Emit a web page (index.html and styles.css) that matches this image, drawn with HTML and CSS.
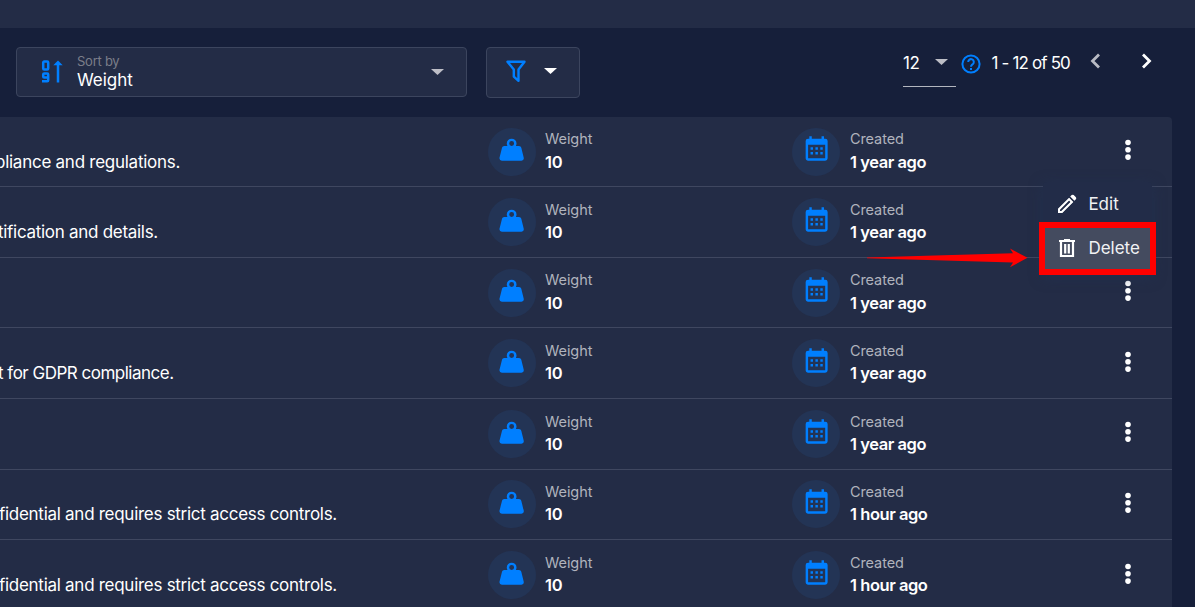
FILE: index.html
```html
<!DOCTYPE html>
<html lang="en">
<head>
<meta charset="utf-8">
<title>Weights</title>
<link rel="stylesheet" href="styles.css">
</head>
<body>
<svg width="0" height="0" class="defs">
  <symbol id="weight" viewBox="0 0 24 24"><path d="M12,3A4,4 0 0,1 16,7C16,7.73 15.81,8.41 15.46,9H18C18.95,9 19.75,9.67 19.95,10.56C21.96,18.57 22,18.78 22,19A2,2 0 0,1 20,21H4A2,2 0 0,1 2,19C2,18.78 2.04,18.57 4.05,10.56C4.25,9.67 5.05,9 6,9H8.54C8.19,8.41 8,7.73 8,7A4,4 0 0,1 12,3M12,5A2,2 0 0,0 10,7A2,2 0 0,0 12,9A2,2 0 0,0 14,7A2,2 0 0,0 12,5Z"/></symbol>
  <symbol id="calendar" viewBox="0 0 24 24"><path d="M9,10V12H7V10H9M13,10V12H11V10H13M17,10V12H15V10H17M19,3A2,2 0 0,1 21,5V19A2,2 0 0,1 19,21H5C3.89,21 3,20.1 3,19V5A2,2 0 0,1 5,3H6V1H8V3H16V1H18V3H19M19,19V8H5V19H19M9,14V16H7V14H9M13,14V16H11V14H13M17,14V16H15V14H17Z"/></symbol>
  <symbol id="dots" viewBox="0 0 6 22"><circle cx="3" cy="3.5" r="2.8"/><circle cx="3" cy="10.8" r="2.8"/><circle cx="3" cy="18.1" r="2.8"/></symbol>
</svg>
<header class="topbar"></header>
<section class="toolbar">
  <div class="sort">
    <svg class="sort-icon" width="22" height="23" viewBox="0 0 22 23"><g fill="none" stroke="#007fff" stroke-width="2.5"><rect x="2.2" y="1.6" width="5" height="7.800" rx="1"/><path d="M7.200 17.400H3.200Q2.200 17.400 2.200 16.400V14.600Q2.200 13.600 3.200 13.600H6.200Q7.200 13.600 7.200 14.600V20.200Q7.200 21.200 6.200 21.200H1M17 22.400V4"/></g><path fill="#007fff" d="M17 .6 21.700 5.2H12.300Z"/></svg>
    <div class="sort-text"><span class="sort-label">Sort by</span><span class="sort-value">Weight</span></div>
    <i class="caret"></i>
  </div>
  <div class="filter">
    <svg width="20" height="23" viewBox="0 0 20 23"><path fill="none" stroke="#007fff" stroke-width="2.4" stroke-linejoin="round" d="M1.5 1.700H18.500L12.500 9.500V20.800L7.800 16.600V9.500Z"/></svg>
    <i class="caret white"></i>
  </div>
  <div class="pager">
    <div class="size"><span>12</span><i class="caret"></i></div>
    <svg class="help" width="20" height="20" viewBox="0 0 20 20"><g fill="none" stroke="#007fff" stroke-width="2"><circle cx="10" cy="10" r="8.6"/><path d="M7.2 8a2.8 2.8 0 1 1 4.7 2C10.7 11 10 11.400 10 12.800"/></g><path fill="#007fff" d="M9 14h2v2H9z"/></svg>
    <span class="range">1 - 12 of 50</span>
    <svg class="prev" width="11" height="16" viewBox="0 0 11 16"><path d="M9 1.500 2.500 8 9 14.500"/></svg>
    <svg class="next" width="11" height="16" viewBox="0 0 11 16"><path d="M2 1.500 8.500 8 2 14.500"/></svg>
  </div>
</section>
<main class="list" id="list"></main>
<div class="menu">
  <div class="item"><svg width="20" height="20" viewBox="0 0 20 20"><path fill="#fff" fill-rule="evenodd" d="M1 14.800 12.100 3.700 16.300 7.900 5.200 19H1ZM3 15.700V17H4.300L13.500 7.900 12.100 6.500ZM13.200 2.600 14.700 1.100Q15.700.300 16.700 1.100L18.900 3.300Q19.700 4.300 18.900 5.300L17.400 6.800Z"/><path fill="none" stroke="#fff" stroke-width="1.300" d="M2 15.200 12.100 5.100 14.900 7.900 4.800 18H2Z"/></svg><span class="edit">Edit</span></div>
  <div class="item active"><svg width="20" height="20" viewBox="0 0 20 20"><path fill="none" stroke="#fff" stroke-width="2.200" d="M2 3H18M7 2H13M4 3V18H16V3M8.200 6V15.500M11.800 6V15.500"/></svg><span class="delete">Delete</span></div>
</div>
<div class="highlight"></div>
<svg class="arrow" width="162" height="20" viewBox="0 0 162 20"><path fill="#f00" d="M0 9.500 146 5.200 143 .500 160.500 9.800 143 19.200 146 14.400 0 10.300Z"/></svg>
<script src="app.js"></script>
</body>
</html>
```
FILE: styles.css
```css
* { box-sizing: border-box; }
body {
  margin: 0; height: 607px; overflow: hidden; position: relative;
  background: #161f3a; color: #fff;
  font: 16px/22px Inter, "Noto Sans", sans-serif;
}
span { white-space: nowrap; }
.defs { position: absolute; }
.topbar { height: 28px; background: #232c46; }
.toolbar { display: flex; align-items: flex-start; height: 88.7px; padding: 19px 0 0 16px; }
.sort, .filter { display: flex; background: #232c46; border: 1px solid #3c455e; border-radius: 4px; }
.sort { width: 451px; height: 50px; padding: 0 22px 0 24px; margin-right: 19px; }
.sort-icon { margin: 12px 14px 0 0; }
.sort-text { display: flex; flex-direction: column; flex: 1; }
.sort-label { font-size: 13px; line-height: 16px; color: #7b7e89; margin-top: 5px; letter-spacing: -.25px; }
.sort-value { font-size: 17px; line-height: 22px; letter-spacing: -.05px; }
.caret { width: 13px; height: 6px; background: #bdbec6; clip-path: polygon(0 0, 100% 0, 50% 100%); }
.sort .caret { margin-top: 21px; }
.white { background: #fff; }
.filter { width: 94px; height: 51px; padding: 12px 0 0 19px; }
.filter .caret { margin: 8px 0 0 18px; }
.pager { display: flex; margin-left: 323px; }
.size { width: 53px; height: 40px; border-bottom: 1px solid #b3b6bf; display: flex; padding-top: 5px; }
.size span { width: 32px; font-size: 17px; letter-spacing: -.4px; }
.size .caret { margin-top: 7px; }
.help { margin: 7px 0 0 5px; }
.range { margin: 5px 0 0 10.500px; width: 80.500px; font-size: 17px; letter-spacing: -.85px; }
.prev, .next { fill: none; stroke: #b9bbc4; stroke-width: 2.8; margin: 6px 0 0 18px; }
.next { stroke: #fff; margin-left: 40px; }
.list { width: 1172px; background: #232c46; border-radius: 0 4px 0 0; }
.row { height: 70.58px; border-bottom: 1px solid #3f4760; display: flex; padding-top: 10.900px; }
.desc { width: 488px; padding-top: 23px; overflow: hidden; font-size: 17px; }
.desc span { display: block; }
.circle { width: 48px; height: 48px; border-radius: 50%; background: #233455; padding: 7.700px 9.400px; }
.circle svg { width: 29.300px; height: 29.300px; fill: #007fff; display: block; }
.circle.cal { padding-left: 9.900px; }
.field { display: flex; flex-direction: column; padding-left: 9px; }
.label { font-size: 14.5px; line-height: 22px; height: 21.35px; margin-top: .65px; color: #b0b3bd; letter-spacing: -.05px; }
.value { font-weight: 600; font-size: 16.500px; line-height: 24px; letter-spacing: -.35px; }
.date { letter-spacing: -.45px; }
.weight { width: 256px; }
.created { width: 276px; padding-left: 10px; }
.created .label { letter-spacing: -.1px; }
.dots { width: 6px; height: 22px; fill: #fff; margin: 11.600px 0 0 8.500px; }
.menu { position: absolute; left: 1043px; top: 182px; width: 109px; height: 92px; background: #222c48; border-radius: 4px; box-shadow: 0 3px 14px #22345590; }
.item { height: 44px; display: flex; align-items: center; gap: 11px; padding-left: 14.400px; color: #f1f2f4; font-size: 17px; }
.active { height: 48px; padding-bottom: 4px; background: #444b5f; }
.highlight { position: absolute; left: 1039px; top: 222px; width: 117px; height: 53px; border: 6px solid #f00; }
.arrow { position: absolute; left: 867px; top: 248px; }
```
FILE: app.js
```js
// text, letter spacing and left offset of the scrolled description column
const rows = [
  ['pliance and regulations.', -0.26, -5, '1 year ago'],
  ['tification and details.', -0.29, -2, '1 year ago'],
  ['', 0, 0, '1 year ago'],
  ['t for GDPR compliance.', -0.5, -2, '1 year ago'],
  ['', 0, 0, '1 year ago'],
  ['fidential and requires strict access controls.', -0.28, -1, '1 hour ago'],
  ['fidential and requires strict access controls.', -0.28, -1, '1 hour ago'],
];
document.getElementById('list').innerHTML = rows.map(([text, spacing, left, date]) => `
<div class="row">
  <div class="desc"><span style="letter-spacing:${spacing}px;margin-left:${left}px">${text}</span></div>
  <div class="circle"><svg><use href="#weight"/></svg></div>
  <div class="field weight"><span class="label">Weight</span><span class="value">10</span></div>
  <div class="circle cal"><svg><use href="#calendar"/></svg></div>
  <div class="field created"><span class="label">Created</span><span class="value date">${date}</span></div>
  <svg class="dots"><use href="#dots"/></svg>
</div>`).join('');
```
